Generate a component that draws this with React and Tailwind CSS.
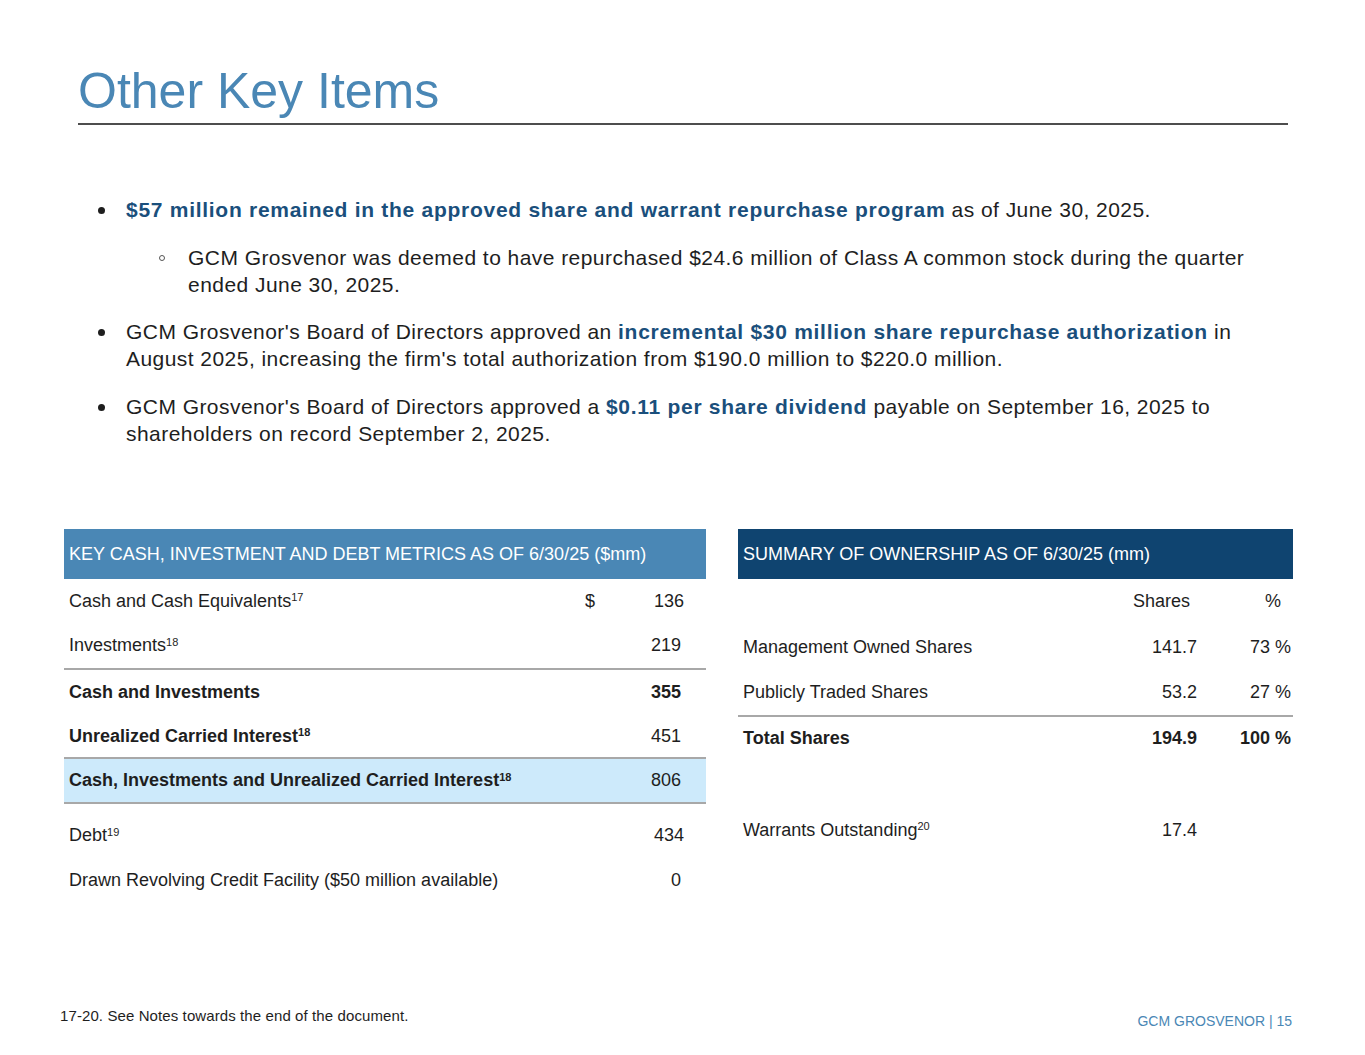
export default function App() {
	return (
		<div className="w-[1365px] h-[1055px] flex flex-col bg-white text-[#1e1e1e] font-['Liberation_Sans',Arial,sans-serif]">
			{/* Titulo */}
			<div className="pl-[78px] pr-[77px] pt-[63px]">
				<h1 className="text-[50px] leading-[56px] text-[#4a87b5]">Other Key Items</h1>
				<div className="mt-[4px] h-[2px] bg-[#4d4d4d]" />
			</div>

			{/* Puntos */}
			<div className="mt-[71px] pl-[78px] pr-[60px] text-[21px] leading-[27px] tracking-[0.45px]">
				<div className="flex">
					<div className="w-[48px] shrink-0 pl-[20px] pt-[11px]">
						<div className="w-[7px] h-[7px] rounded-full bg-[#1e1e1e]" />
					</div>
					<p>
						<span className="font-bold text-[#1a4f7c] tracking-[0.72px]">
							$57 million remained in the approved share and warrant repurchase program
						</span>{" "}
						as of June 30, 2025.
					</p>
				</div>

				<div className="flex mt-[21px] pl-[60px]">
					<div className="w-[50px] shrink-0 pl-[21px] pt-[11px]">
						<div className="w-[6px] h-[6px] rounded-full border border-[#555]" />
					</div>
					<p className="whitespace-nowrap">
						GCM Grosvenor was deemed to have repurchased $24.6 million of Class A common stock during the quarter
						<br />
						ended June 30, 2025.
					</p>
				</div>

				<div className="flex mt-[20px]">
					<div className="w-[48px] shrink-0 pl-[20px] pt-[11px]">
						<div className="w-[7px] h-[7px] rounded-full bg-[#1e1e1e]" />
					</div>
					<p className="whitespace-nowrap">
						GCM Grosvenor's Board of Directors approved an{" "}
						<span className="font-bold text-[#1a4f7c] tracking-[0.72px]">incremental $30 million share repurchase authorization</span> in
						<br />
						August 2025, increasing the firm's total authorization from $190.0 million to $220.0 million.
					</p>
				</div>

				<div className="flex mt-[21px]">
					<div className="w-[48px] shrink-0 pl-[20px] pt-[11px]">
						<div className="w-[7px] h-[7px] rounded-full bg-[#1e1e1e]" />
					</div>
					<p className="whitespace-nowrap">
						GCM Grosvenor's Board of Directors approved a{" "}
						<span className="font-bold text-[#1a4f7c] tracking-[0.72px]">$0.11 per share dividend</span> payable on September 16, 2025 to
						<br />
						shareholders on record September 2, 2025.
					</p>
				</div>
			</div>

			{/* Tablas */}
			<div className="mt-[82px] pl-[64px] flex gap-[32px] text-[18px]">
				{/* Tabla izquierda */}
				<div className="w-[642px]">
					<div className="h-[50px] flex items-center px-[5px] bg-[#4a87b5] text-white text-[18px]">
						KEY CASH, INVESTMENT AND DEBT METRICS AS OF 6/30/25 ($mm)
					</div>
					<div className="h-[44px] flex items-center pl-[5px] pr-[22px]">
						<span className="flex-1">
							Cash and Cash Equivalents<sup className="text-[11px]">17</sup>
						</span>
						<span className="w-[29px]">$</span>
						<span className="w-[70px] text-right">136</span>
					</div>
					<div className="h-[47px] flex items-center pl-[5px] pr-[25px] border-b-2 border-[#a8a8a8]">
						<span className="flex-1">
							Investments<sup className="text-[11px]">18</sup>
						</span>
						<span className="w-[70px] text-right">219</span>
					</div>
					<div className="h-[45px] flex items-center pl-[5px] pr-[25px] font-bold">
						<span className="flex-1">Cash and Investments</span>
						<span className="w-[70px] text-right">355</span>
					</div>
					<div className="h-[44px] flex items-center pl-[5px] pr-[25px] border-b-2 border-[#a8a8a8]">
						<span className="flex-1 font-bold">
							Unrealized Carried Interest<sup className="text-[11px]">18</sup>
						</span>
						<span className="w-[70px] text-right">451</span>
					</div>
					<div className="h-[45px] flex items-center pl-[5px] pr-[25px] bg-[#cdeafb] border-b-2 border-[#a8a8a8]">
						<span className="flex-1 font-bold">
							Cash, Investments and Unrealized Carried Interest<sup className="text-[11px]">18</sup>
						</span>
						<span className="w-[70px] text-right">806</span>
					</div>
					<div className="h-[9px]" />
					<div className="h-[45px] flex items-center pl-[5px] pr-[22px]">
						<span className="flex-1">
							Debt<sup className="text-[11px]">19</sup>
						</span>
						<span className="w-[70px] text-right">434</span>
					</div>
					<div className="h-[45px] flex items-center pl-[5px] pr-[25px]">
						<span className="flex-1">Drawn Revolving Credit Facility ($50 million available)</span>
						<span className="w-[70px] text-right">0</span>
					</div>
				</div>

				{/* Tabla derecha */}
				<div className="w-[555px]">
					<div className="h-[50px] flex items-center px-[5px] bg-[#0f4470] text-white text-[18px]">
						SUMMARY OF OWNERSHIP AS OF 6/30/25 (mm)
					</div>
					<div className="h-[45px] flex items-center pl-[5px] pr-[2px]">
						<span className="flex-1" />
						<span className="w-[100px] text-right pr-[7px]">Shares</span>
						<span className="w-[94px] text-right pr-[10px]">%</span>
					</div>
					<div className="h-[46px] flex items-center pl-[5px] pr-[2px]">
						<span className="flex-1">Management Owned Shares</span>
						<span className="w-[100px] text-right">141.7</span>
						<span className="w-[94px] text-right">73 %</span>
					</div>
					<div className="h-[47px] flex items-center pl-[5px] pr-[2px] border-b-2 border-[#a8a8a8]">
						<span className="flex-1">Publicly Traded Shares</span>
						<span className="w-[100px] text-right">53.2</span>
						<span className="w-[94px] text-right">27 %</span>
					</div>
					<div className="h-[43px] flex items-center pl-[5px] pr-[2px] font-bold">
						<span className="flex-1">Total Shares</span>
						<span className="w-[100px] text-right">194.9</span>
						<span className="w-[94px] text-right">100 %</span>
					</div>
					<div className="h-[48px]" />
					<div className="h-[44px] flex items-center pl-[5px] pr-[2px]">
						<span className="flex-1">
							Warrants Outstanding<sup className="text-[11px]">20</sup>
						</span>
						<span className="w-[100px] text-right">17.4</span>
						<span className="w-[94px]" />
					</div>
				</div>
			</div>

			{/* Pie */}
			<div className="mt-auto pb-[25px] pl-[60px] pr-[73px] flex justify-between items-start">
				<span className="text-[15px] leading-[20px] tracking-[0.1px]">17-20. See Notes towards the end of the document.</span>
				<span className="mt-[6px] text-[14px] leading-[18px] text-[#4a87b5]">GCM GROSVENOR | 15</span>
			</div>
		</div>
	);
}
